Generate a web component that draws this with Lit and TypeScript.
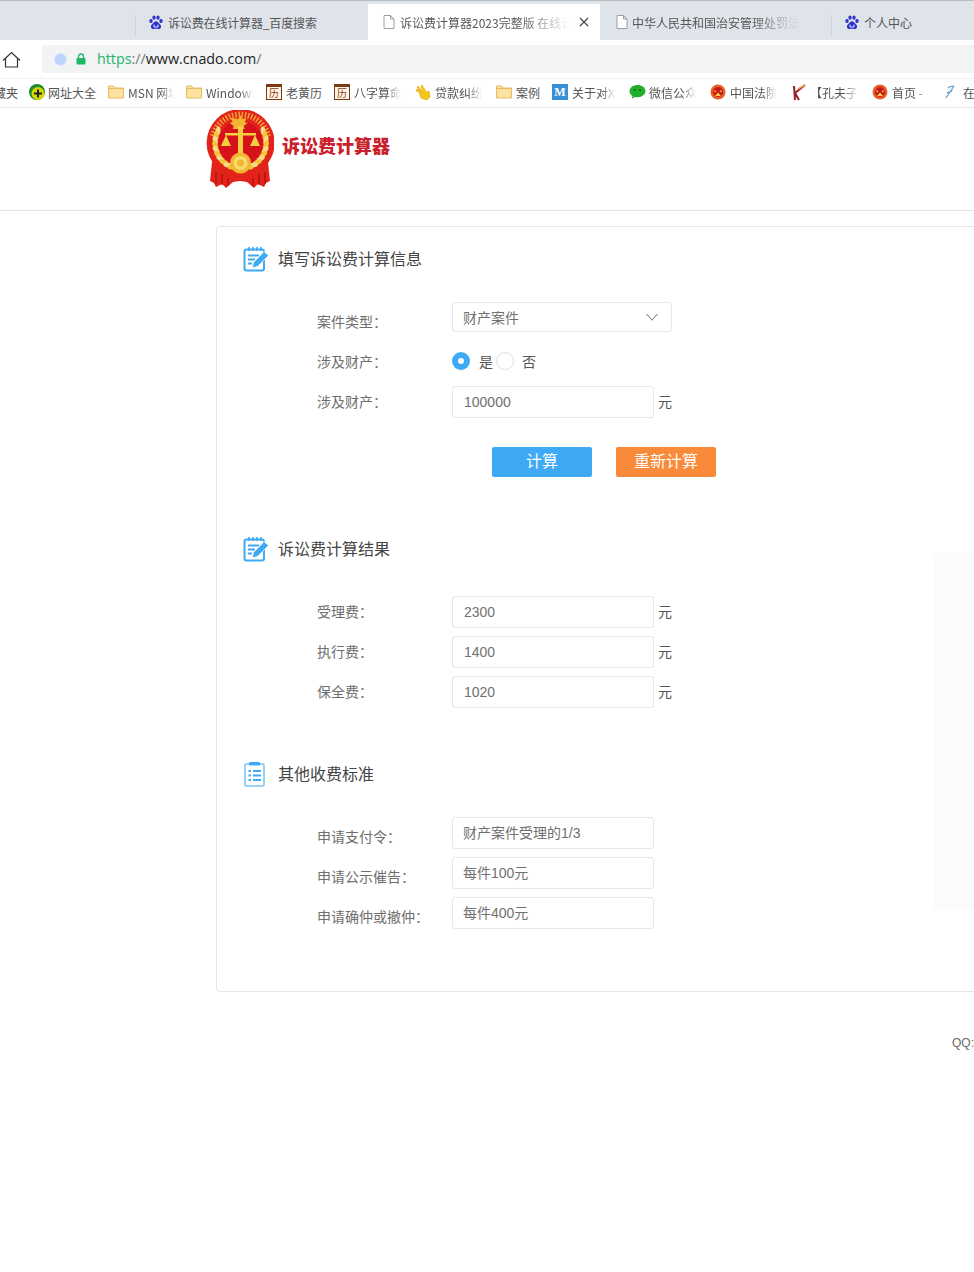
import { LitElement, html, css, svg } from "lit";
import { customElement } from "lit/decorators.js";

const paw = svg`<svg width="14" height="15" viewBox="0 0 14 15"><g fill="#2b32c9"><ellipse cx="2" cy="6" rx="1.7" ry="2.1"/><ellipse cx="5" cy="2.6" rx="1.6" ry="2.2"/><ellipse cx="9" cy="2.6" rx="1.6" ry="2.2"/><ellipse cx="12" cy="6" rx="1.7" ry="2.1"/><path d="M7 6.2c-1.6 0-2.2 1.5-3.2 2.4C2.6 9.600 1.800 10.400 2 12c.2 1.500 1.500 2.200 2.900 2 .8-.1 1.400-.3 2.100-.3s1.300.2 2.100.3c1.400.2 2.700-.5 2.900-2 .2-1.600-.6-2.400-1.800-3.400C9.200 7.700 8.600 6.200 7 6.200z"/></g><path d="M5 9.500v2.500h4V9.500" fill="none" stroke="#fff" stroke-width=".9"/></svg>`;
const page = svg`<svg width="12" height="14" viewBox="0 0 12 14"><path d="M1 .5h6.500L11 4v9.500H1zM7.500.5V4H11" fill="#fff" stroke="#9aa0a8"/></svg>`;
const folder = svg`<svg width="16" height="14" viewBox="0 0 16 14"><path d="M.5 1h5l1.500 2h8.500v10H.5z" fill="#fde3a0" stroke="#e8bc62"/><path d="M.5 3.500h15" stroke="#e8bc62"/></svg>`;
const almanac = html`<span class="cal">历</span>`;
const courtDot = svg`<svg width="16" height="16" viewBox="0 0 16 16"><circle cx="8" cy="8" r="7.500" fill="#e8601f"/><circle cx="8" cy="8" r="5" fill="#c8161d"/><path d="M4.500 5.500l2 2-2 1zM11.500 5.500l-2 2 2 1zM5 12h6l-3-3.500z" fill="#f6cf3e"/></svg>`;

const bookmarks = [
  { w: 28, icon: null, text: "藏夹", tw: 18, first: true },
  { w: 80, icon: svg`<svg width="18" height="18" viewBox="0 0 18 18"><circle cx="9" cy="9" r="8" fill="#1d8a2c"/><circle cx="10" cy="10.500" r="6.500" fill="#d3d800"/><path d="M10 6.500v8M6 10.500h8" stroke="#222" stroke-width="2"/></svg>`, text: "网址大全", tw: 50 },
  { w: 78, icon: folder, text: "MSN 网址", tw: 46, fade: true },
  { w: 80, icon: folder, text: "Windows", tw: 48, fade: true },
  { w: 68, icon: almanac, text: "老黄历", tw: 38 },
  { w: 81, icon: almanac, text: "八字算命", tw: 47, fade: true },
  { w: 81, icon: svg`<svg width="18" height="18" viewBox="0 0 18 18"><path d="M1 8l3 1 2 6 6 2 3-3-1-6-1 0-1 2-5-8-1 1 2 6-5-6-1 1 4 6-4-4-1 1z" fill="#f5c518" stroke="#e2a50e" stroke-width=".6"/></svg>`, text: "贷款纠纷", tw: 47, fade: true },
  { w: 56, icon: folder, text: "案例", tw: 26 },
  { w: 77, icon: html`<span class="mbox">M</span>`, text: "关于对X", tw: 43, fade: true },
  { w: 81, icon: svg`<svg width="17" height="16" viewBox="0 0 17 16"><path d="M8.500 1C4 1 .5 3.800.5 7.200c0 2 1.200 3.700 3 4.800l-.7 2.800 3.100-1.900c.8.200 1.700.3 2.600.3 4.500 0 8-2.800 8-6.200S13 1 8.500 1z" fill="#22b02c"/><circle cx="6" cy="6" r="1" fill="#0b6a12"/><circle cx="11" cy="6" r="1" fill="#0b6a12"/></svg>`, text: "微信公众", tw: 47, fade: true },
  { w: 80, icon: courtDot, text: "中国法院", tw: 47, fade: true },
  { w: 82, icon: svg`<svg width="17" height="18" viewBox="0 0 17 18"><path d="M4 3l1 14M5 10L15 2M5 10l4 7" fill="none" stroke="#96202a" stroke-width="2"/><path d="M8 6l7-4" stroke="#d9a35c" stroke-width="1.500"/></svg>`, text: "【孔夫子", tw: 48, fade: true },
  { w: 71, icon: courtDot, text: "首页 -", tw: 36, fade: true },
  { w: 40, icon: svg`<svg width="14" height="16" viewBox="0 0 14 16"><path d="M3 14L11 2M5 4c2-2 5-2 6-2M4 9c1-1 5-1 5-3" fill="none" stroke="#5f9bc9" stroke-width="1.200"/></svg>`, text: "在线", tw: 14 },
];

const notepad = svg`<svg class="hicon" width="26" height="26" viewBox="0 0 26 26"><rect x="1.500" y="3.500" width="19.500" height="21" rx="2" fill="#fff" stroke="#3ea9f5" stroke-width="2"/><path d="M6 1v4M10 1v4M14 1v4M18 1v4" stroke="#3ea9f5" stroke-width="1.600"/><path d="M5 9.500h11M5 13.500h7M5 17.500h4" stroke="#3ea9f5" stroke-width="1.800"/><path d="M9 22l1.500-5.500L21 5.500l4.500 4L14.500 20.500z" fill="#3ea9f5" stroke="#fff" stroke-width=".8"/></svg>`;
const listIcon = svg`<svg class="hicon" width="24" height="26" viewBox="0 0 24 26"><rect x="2" y="3" width="19" height="22" rx="1.500" fill="#fff" stroke="#7cc5f7" stroke-width="1.600"/><rect x="6" y="1" width="11" height="3.500" rx="1" fill="#3ea9f5"/><path d="M5.500 10h2.500M10 10h8M5.500 14.500h2.500M10 14.500h8M5.500 19h2.500M10 19h8" stroke="#3ea9f5" stroke-width="2.200"/></svg>`;

const wheat = (side: number) => {
  const out = [];
  for (let i = 0; i < 10; i++) {
    const phi = ((-28 + i * 11) * Math.PI) / 180;
    const x = 34.6 + side * Math.cos(phi) * 25.5;
    const y = 33 + Math.sin(phi) * 25.5;
    const rot = side * ((phi * 180) / Math.PI + 20);
    out.push(svg`<ellipse cx="${x}" cy="${y}" rx="2.400" ry="4.600" fill="${i % 2 ? "#f3c33a" : "#f6dc86"}" transform="rotate(${rot} ${x} ${y})"/>`);
  }
  return out;
};

const emblem = svg`<svg width="68" height="78" viewBox="0 0 68 78">
  <path d="M6 52L4 71l4 2 2 4 6-3 4 4 7-6 7-1 7 1 7 6 4-4 6 3 2-4 4-2-2-19z" fill="#e2231a"/>
  <path d="M10 62v12M16 64v11M22 68v8M47 68v8M53 64v11M59 62v12" stroke="#a40d10" stroke-width="1.100"/>
  <circle cx="34.600" cy="33" r="34" fill="#e2231a"/>
  <path d="M7 26A28.500 28.500 0 0 1 62.200 26" fill="none" stroke="#f0a23a" stroke-width="6" stroke-dasharray="1.500 1.700"/>
  <circle cx="34.600" cy="33" r="22" fill="#d5111a"/>
  ${wheat(-1)}${wheat(1)}
  <path d="M32.500 9l2.100-4 2.100 4 4-1-2 4 3 1-4 3 1 3h-12l1-3-4-3 3-1-2-4z" fill="#f2b632"/>
  <path d="M19 23h31v2.500H19z" fill="#f6cf3e"/><path d="M32 16h5v40h-5z" fill="#f6cf3e"/>
  <path d="M20 25l-5 11h10zM49 25l-5 11h10z" fill="#f6cf3e"/>
  <circle cx="34.500" cy="53" r="10.500" fill="#f2b632"/>
  <circle cx="34.500" cy="53" r="7" fill="#f6da6a"/>
  <circle cx="34.500" cy="53" r="3.500" fill="#f2b632"/>
</svg>`;

@customElement("app-root")
export class AppRoot extends LitElement {
  static styles = css`
    :host { display: block; width: 974px; min-height: 1272px; overflow: hidden; background: #fff; font-family: "Noto Sans CJK SC", "Liberation Sans", sans-serif; position: relative; }
    .topline { height: 1px; background: #b9bdc3; }
    .tabs { display: flex; height: 39px; background: #dfe3ea; padding-left: 135px; color: #555; font-size: 12px; }
    .tab { display: flex; align-items: center; height: 100%; box-sizing: border-box; flex: none; padding-top: 3px; }
    .tab svg { flex: none; }
    .sep { background: linear-gradient(#cdd1d8, #cdd1d8) left 14px / 1px 20px no-repeat; }
    .t1 { width: 233px; padding-left: 14px; gap: 5px; letter-spacing: -0.15px; }
    .t2 { width: 232px; padding-left: 15px; padding-top: 0; gap: 5px; background: #fff; margin-top: 3px; height: 36px; position: relative; }
    .t3 { width: 231px; padding-left: 16px; gap: 4px; }
    .t4 { padding-left: 14px; gap: 5px; }
    .tabs .fade, .bm .fade { -webkit-mask-image: linear-gradient(90deg, #000 70%, transparent); mask-image: linear-gradient(90deg, #000 70%, transparent); }
    .ttext { white-space: nowrap; overflow: hidden; display: block; }
    .close { position: absolute; left: 211px; top: 13px; }
    .addr { height: 38px; display: flex; align-items: center; box-sizing: border-box; padding: 0 0 0 2px; }
    .home { flex: none; width: 40px; line-height: 0; padding-top: 1px; }
    .url { flex: 1; height: 28px; background: #f1f3f5; border-radius: 3px 0 0 3px; display: flex; align-items: center; padding-left: 12px; gap: 9px; font-family: "Open Sans", "Liberation Sans", sans-serif; font-size: 14.300px; color: #222; }
    .utext { margin-left: 2px; padding-bottom: 2px; }
    .shield { width: 13px; height: 13px; border-radius: 50%; background: #bcd3fb; border: 1px solid #dce7fc; box-sizing: border-box; flex: none; }
    .lock { flex: none; }
    .h { color: #27b36a; } .g { color: #777; }
    .bms { height: 28px; border-top: 1px solid #eef0f2; border-bottom: 1px solid #e8e8e8; display: flex; align-items: center; font-size: 12px; color: #555; overflow: hidden; }
    .bm { display: flex; align-items: center; flex: none; overflow: hidden; padding-bottom: 2px; }
    .bi { width: 20px; flex: none; display: flex; align-items: center; }
    .bt { white-space: nowrap; overflow: hidden; display: block; flex: none; }
    .cal { display: block; width: 16px; height: 16px; box-sizing: border-box; border: 1px solid #7a3a12; border-top-width: 3px; font-size: 10px; line-height: 12px; text-align: center; color: #8a3a12; background: #fff5e6; }
    .mbox { display: block; width: 16px; height: 16px; background: #3b8fd6; color: #fff; font: bold 12px/16px "Liberation Serif", serif; text-align: center; }
    .logo { height: 102px; border-bottom: 1px solid #e4e4e4; padding-left: 206px; display: flex; align-items: flex-start; gap: 8px; }
    .emblem { margin-top: 2px; flex: none; line-height: 0; }
    .ltext { color: #c9202b; font-size: 18px; font-weight: 900; line-height: 26px; margin-top: 24px; white-space: nowrap; }
    .card { margin: 15px 0 0 216px; width: 900px; box-sizing: border-box; border: 1px solid #e6e6e6; border-radius: 4px; padding: 19px 0 53px 26px; height: 766px; }
    .head { display: flex; align-items: center; height: 26px; font-size: 16px; color: #444; }
    .htext { padding-bottom: 2px; }
    .hicon { flex: none; margin-right: 9px; }
    .form { margin: 30px 0 0 74px; }
    .row { display: flex; align-items: center; height: 40px; font-size: 14px; color: #6e6e6e; }
    .label { width: 135px; flex: none; white-space: nowrap; padding-bottom: 2px; }
    .box { width: 202px; height: 32px; box-sizing: border-box; border: 1px solid #e4e7ed; border-radius: 3px; color: #707070; padding-left: 11px; display: flex; align-items: center; flex: none; white-space: nowrap; }
    .top .box { align-self: flex-start; padding-bottom: 2px; padding-left: 10px; }
    .top .select { width: 220px; height: 30px; justify-content: space-between; padding-right: 13px; padding-bottom: 0; }
    .num { font-family: "Liberation Sans", "Noto Sans CJK SC", sans-serif; }
    .unit { margin-left: 4px; color: #555; padding-bottom: 2px; }
    .radio { width: 18px; height: 18px; border-radius: 50%; box-sizing: border-box; flex: none; margin-bottom: 2px; }
    .on { background: #3ea9f5; display: flex; align-items: center; justify-content: center; }
    .on::after { content: ""; width: 6px; height: 6px; border-radius: 50%; background: #fff; }
    .off { border: 1px solid #dcdfe6; background: #fff; }
    .rtext { color: #555; padding-bottom: 2px; }
    .buttons { display: flex; gap: 24px; margin: 25px 0 0 249px; height: 30px; }
    .btn { width: 100px; height: 30px; box-sizing: border-box; padding-bottom: 4px; border-radius: 2px; color: #fff; font-size: 16px; display: flex; align-items: center; justify-content: center; }
    .blue { background: #3ea9f5; } .orange { background: #f98a3a; }
    .s2 { margin-top: 59px; }
    .s3 { margin-top: 49px; }
    .faint { position: absolute; left: 933px; top: 553px; width: 41px; height: 356px; background: #fbfbfb; }
    .qq { margin: 42px 0 0 952px; font: 12px/18px "Liberation Sans", sans-serif; color: #666; white-space: nowrap; width: 22px; overflow: hidden; }
  `;

  private inputRow(label: string, value: string, unit = true, cls = "") {
    return html`<div class="row ${cls}"><div class="label">${label}</div><div class="box num">${value}</div>${unit ? html`<span class="unit">元</span>` : ""}</div>`;
  }

  render() {
    return html`
      <div class="topline"></div>
      <div class="tabs">
        <div class="tab t1 sep">${paw}<span class="ttext">诉讼费在线计算器_百度搜索</span></div>
        <div class="tab t2">${page}<span class="ttext fade" style="width:170px">诉讼费计算器2023完整版 在线计算</span>
          <svg class="close" width="10" height="10" viewBox="0 0 10 10"><path d="M1 1l8 8M9 1l-8 8" stroke="#444" stroke-width="1.100"/></svg></div>
        <div class="tab t3">${page}<span class="ttext fade" style="width:168px">中华人民共和国治安管理处罚法</span></div>
        <div class="tab t4 sep">${paw}<span class="ttext">个人中心</span></div>
      </div>
      <div class="addr">
        <div class="home"><svg width="19" height="17" viewBox="0 0 19 17"><path d="M1 9.500L9.500 1.500 18 9.500M3.500 7.500v8.500h12V7.500" fill="none" stroke="#333" stroke-width="1.200"/></svg></div>
        <div class="url"><span class="shield"></span>
          <svg class="lock" width="10" height="12" viewBox="0 0 10 12"><path d="M2.500 5V3.500a2.500 2.500 0 0 1 5 0V5" fill="none" stroke="#1fb866" stroke-width="1.400"/><rect x="0.500" y="5" width="9" height="6.500" rx="1" fill="#1fb866"/></svg>
          <span class="utext"><span class="h">https</span><span class="g">://</span>www.cnado.com<span class="g">/</span></span></div>
      </div>
      <div class="bms">
        ${bookmarks.map((b) => html`<div class="bm" style="width:${b.w}px">
          ${b.first ? html`<span class="bt" style="width:${b.tw}px;direction:rtl">${b.text}</span>` : html`<span class="bi">${b.icon}</span><span class="bt ${b.fade ? "fade" : ""}" style="width:${b.tw}px">${b.text}</span>`}
        </div>`)}
      </div>
      <div class="logo"><div class="emblem">${emblem}</div><div class="ltext">诉讼费计算器</div></div>
      <div class="card">
        <div class="head">${notepad}<span class="htext">填写诉讼费计算信息</span></div>
        <div class="form">
          <div class="row top"><div class="label">案件类型：</div><div class="box select"><span>财产案件</span>
            <svg width="12" height="8" viewBox="0 0 12 8"><path d="M.5 1L6 7l5.500-6" fill="none" stroke="#888" stroke-width="1.100"/></svg></div></div>
          <div class="row"><div class="label">涉及财产：</div><span class="radio on"></span><span class="rtext" style="margin:0 3px 0 9px">是</span><span class="radio off"></span><span class="rtext" style="margin-left:8px">否</span></div>
          ${this.inputRow("涉及财产：", "100000")}
        </div>
        <div class="buttons"><div class="btn blue">计算</div><div class="btn orange">重新计算</div></div>
        <div class="head s2">${notepad}<span class="htext">诉讼费计算结果</span></div>
        <div class="form">
          ${this.inputRow("受理费：", "2300")}
          ${this.inputRow("执行费：", "1400")}
          ${this.inputRow("保全费：", "1020")}
        </div>
        <div class="head s3">${listIcon}<span class="htext" style="margin-left:2px">其他收费标准</span></div>
        <div class="form">
          ${this.inputRow("申请支付令：", "财产案件受理的1/3", false, "top")}
          ${this.inputRow("申请公示催告：", "每件100元", false, "top")}
          ${this.inputRow("申请确仲或撤仲：", "每件400元", false, "top")}
        </div>
      </div>
      <div class="faint"></div>
      <div class="qq">QQ:123456</div>
    `;
  }
}
